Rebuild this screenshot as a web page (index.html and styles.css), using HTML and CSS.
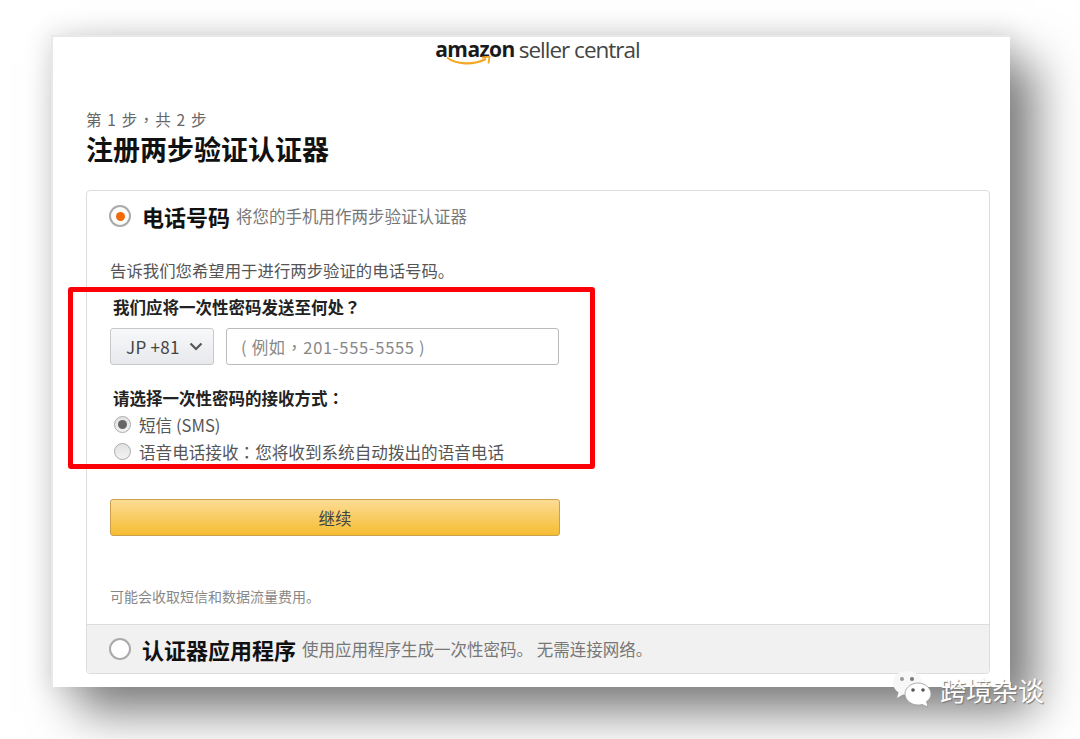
FILE: index.html
```html
<!DOCTYPE html>
<html lang="zh-CN">
<head>
    <meta charset="UTF-8">
    <meta name="viewport" content="width=device-width, initial-scale=1.0">
    <title>注册两步验证认证器</title>
    <link rel="stylesheet" href="styles.css">
</head>
<body>
    <div class="window">
        <header class="logo">
            <div class="logo-mark">
                <span class="logo-amazon">amazon</span>
                <svg class="logo-smile" width="46" height="11" viewBox="0 0 46 11">
                    <path d="M1 1.5C10 8.5 27 9.5 40 3" fill="none" stroke="#f5a623" stroke-width="2.2"/>
                    <path d="M36 1.5L43.5 0.5L42.5 7.5" fill="none" stroke="#f5a623" stroke-width="1.8"/>
                </svg>
            </div>
            <span class="logo-seller">seller central</span>
        </header>

        <main class="content">
            <p class="step">第 1 步<span class="punct" lang="zh-TW">，</span>共 2 步</p>
            <h1>注册两步验证认证器</h1>

            <div class="card">
                <section class="panel">
                    <div class="panel-head">
                        <span class="radio-big radio-on"></span>
                        <h2>电话号码</h2>
                        <span class="panel-sub">将您的手机用作两步验证认证器</span>
                    </div>
                    <p class="intro">告诉我们您希望用于进行两步验证的电话号码。</p>
                    <label class="field-label" for="phone">我们应将一次性密码发送至何处<span class="punct" lang="zh-TW">？</span></label>
                    <div class="phone-row">
                        <div class="country">
                            <span>JP +81</span>
                            <svg width="14" height="9" viewBox="0 0 14 9">
                                <path d="M1.500 1.500L7 7L12.500 1.500" fill="none" stroke="#555" stroke-width="2.200"/>
                            </svg>
                        </div>
                        <input class="phone" id="phone" type="text" lang="zh-TW" placeholder="( 例如，201-555-5555 )">
                    </div>
                    <p class="field-label method-label">请选择一次性密码的接收方式<span class="punct" lang="zh-TW">：</span></p>
                    <div class="option">
                        <span class="radio-small radio-checked"></span>
                        <span>短信 (SMS)</span>
                    </div>
                    <div class="option">
                        <span class="radio-small"></span>
                        <span>语音电话接收<span class="punct" lang="zh-TW">：</span>您将收到系统自动拨出的语音电话</span>
                    </div>
                    <button class="continue" type="button">继续</button>
                    <p class="note">可能会收取短信和数据流量费用。</p>
                </section>
                <section class="panel-closed">
                    <span class="radio-big"></span>
                    <h2>认证器应用程序</h2>
                    <span class="panel-sub">使用应用程序生成一次性密码。 无需连接网络。</span>
                </section>
            </div>
        </main>

        <div class="highlight"></div>
    </div>

    <div class="watermark">
        <svg width="40" height="38" viewBox="0 0 40 38">
            <path d="M15 1C7 1 1 6.500 1 13c0 4 2 7 5.500 9.500L5 28l6-3.500c1.500.4 3 .6 4 .6 8 0 15-5.500 15-12C30 6.500 23 1 15 1z" fill="#f7f7f7"/>
            <path d="M26 13c-7 0-13 5-13 11s6 11 13 11c1.500 0 3-.2 4-.6L36 37l-1.500-5.500C37.500 29.500 39 27 39 24c0-6-6-11-13-11z" fill="#fff" stroke="#999" stroke-width=".8"/>
            <circle cx="10" cy="9" r="2" fill="#999"/>
            <circle cx="20" cy="9" r="2" fill="#777"/>
            <circle cx="21" cy="20" r="1.800" fill="#555"/>
            <circle cx="31" cy="20" r="1.800" fill="#555"/>
        </svg>
        <span>跨境杂谈</span>
    </div>
</body>
</html>
```

FILE: styles.css
```css
html, body {
    height: 100%;
}
body {
    font-family: "Noto Sans CJK SC", "Noto Sans", sans-serif;
    background-color: #ffffff;
    color: #333;
    margin: 0;
    padding: 37px 70px 0 53px;
    box-sizing: border-box;
    overflow: hidden;
    position: relative;
    text-spacing-trim: space-all;
}
p, h1, h2 {
    margin: 0;
}
/* the TC face centres full-width punctuation, as the screenshot does */
.punct {
    font-family: "Noto Sans CJK TC", sans-serif;
}
.window {
    position: relative;
    height: 650px;
    background: #ffffff;
    box-shadow:
        -1px -1px 0 1px #e8e8e8,
        25px 25px 45px 0 #7d7d7d,
        0 0 24px 4px #e0e0e0;
}

/* logo */
.logo {
    display: flex;
    justify-content: center;
    align-items: flex-start;
    gap: 4px;
    height: 62px;
    padding-left: 12px;
    color: #333;
}
.logo-mark {
    position: relative;
    height: 30px;
}
.logo-amazon {
    font-family: "Open Sans", sans-serif;
    font-size: 21px;
    font-weight: 700;
    letter-spacing: -0.6px;
    line-height: 25px;
    color: #1a1a1a;
}
.logo-smile {
    position: absolute;
    left: 11px;
    top: 19px;
}
.logo-seller {
    font-family: "Open Sans", sans-serif;
    font-size: 22.500px;
    letter-spacing: -1px;
    line-height: 25px;
    color: #444;
}

.content {
    padding: 10px 20px 0 33px;
}
.step {
    font-size: 15.500px;
    letter-spacing: 1.200px;
    line-height: 20px;
    color: #666;
}
h1 {
    font-size: 27px;
    font-weight: 700;
    line-height: 36px;
    color: #111;
    margin-top: 2px;
    margin-bottom: 23px;
}

.card {
    border: 1px solid #ddd;
    border-radius: 4px;
    height: 484px;
    box-sizing: border-box;
    display: flex;
    flex-direction: column;
}
.panel {
    flex: 1;
    padding: 10px 23px 0;
}
.panel-head {
    display: flex;
    align-items: center;
    height: 30px;
    margin-left: -1px;
}
h2 {
    font-size: 22px;
    font-weight: 700;
    line-height: 30px;
    color: #111;
}
.panel-sub {
    font-size: 16.500px;
    color: #777;
    margin-left: 6px;
}
.radio-big {
    width: 18px;
    height: 18px;
    margin-right: 11px;
    border: 2px solid #aaa;
    border-radius: 50%;
    background: #fff;
    flex-shrink: 0;
    position: relative;
}
.radio-on::after {
    content: "";
    position: absolute;
    left: 4.500px;
    top: 4.500px;
    width: 9px;
    height: 9px;
    border-radius: 50%;
    background: #f26a0a;
}
.intro {
    font-size: 16.400px;
    line-height: 22px;
    color: #555;
    margin-top: 28px;
}
.field-label {
    display: block;
    font-size: 16.500px;
    font-weight: 700;
    line-height: 22px;
    color: #222;
    margin: 15px 0 0 3px;
}
.phone-row {
    display: flex;
    gap: 12px;
    margin-top: 10px;
}
.country {
    width: 104px;
    height: 37px;
    box-sizing: border-box;
    display: flex;
    align-items: center;
    justify-content: space-between;
    padding: 0 10px 0 15px;
    border: 1px solid #c8c8c8;
    border-radius: 3px;
    background: linear-gradient(#f7f8fa, #e7e9ec);
    font-size: 17px;
    letter-spacing: 0.300px;
    color: #444;
}
.phone {
    width: 333px;
    height: 37px;
    box-sizing: border-box;
    padding: 0 14px;
    border: 1px solid #bbb;
    border-radius: 3px;
    font-family: "Noto Sans CJK TC", sans-serif;
    font-size: 16.500px;
    letter-spacing: 0.700px;
}
.phone::placeholder {
    color: #888;
}
.method-label {
    margin-top: 22px;
    margin-bottom: 2px;
}
.option {
    display: flex;
    align-items: center;
    gap: 8px;
    height: 27px;
    margin-left: 4px;
    font-size: 16.600px;
    color: #555;
}
.radio-small {
    width: 17px;
    height: 17px;
    box-sizing: border-box;
    border: 1px solid #aaa;
    border-radius: 50%;
    background: linear-gradient(#e2e2e2, #f2f2f2);
    position: relative;
}
.radio-checked::after {
    content: "";
    position: absolute;
    left: 3px;
    top: 3px;
    width: 9px;
    height: 9px;
    border-radius: 50%;
    background: #666;
}
.continue {
    display: block;
    width: 450px;
    height: 37px;
    margin-top: 34px;
    border: 1px solid #c9a04c;
    border-radius: 3px;
    background: linear-gradient(#fcdc95, #f6bd32);
    font-family: inherit;
    font-size: 16.500px;
    color: #444;
}
.note {
    font-size: 14px;
    line-height: 18px;
    color: #888;
    margin-top: 51px;
}
.panel-closed {
    height: 49px;
    box-sizing: border-box;
    display: flex;
    align-items: center;
    padding: 0 22px;
    background: #f1f1f1;
    border-top: 1px solid #ddd;
    border-radius: 0 0 4px 4px;
}

/* red annotation drawn over the form */
.highlight {
    position: absolute;
    left: 15px;
    top: 250px;
    width: 527px;
    height: 182px;
    box-sizing: border-box;
    border: 5px solid #fb0007;
    border-radius: 3px;
}

.watermark {
    position: absolute;
    left: 892px;
    top: 670px;
    display: flex;
    align-items: center;
    gap: 8px;
    font-size: 26px;
    color: #fff;
    text-shadow: 1px 1px 1px #777;
}
```
